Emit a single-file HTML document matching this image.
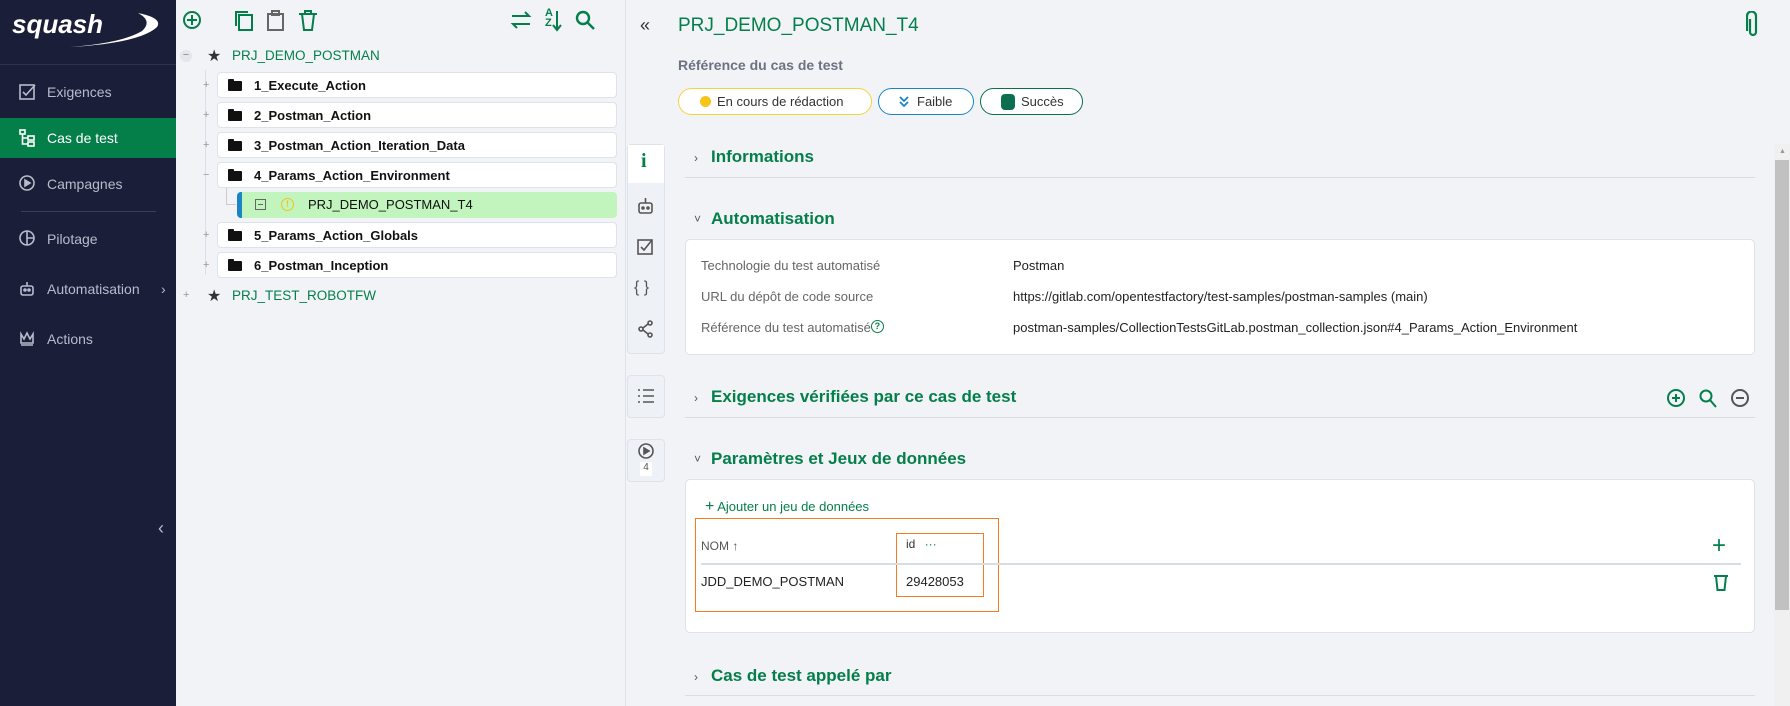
<!DOCTYPE html>
<html><head><meta charset="utf-8"><style>
*{box-sizing:border-box;margin:0;padding:0}
body{width:1790px;height:706px;overflow:hidden;background:#f2f3f7;font-family:"Liberation Sans",sans-serif;position:relative;color:#333}
.abs{position:absolute}
#side{left:0;top:0;width:176px;height:706px;background:#1b1e38}
.mi{position:absolute;left:0;width:176px;height:40px;color:#b8bccb;font-size:14px;display:flex;align-items:center;padding-left:47px}
.mi svg{position:absolute;left:19px;top:11px}
.mi.act{background:#047f4a;color:#fff}
.g{color:#047f4a}
.row{position:absolute;left:217px;width:400px;height:26px;background:#fff;border:1px solid #dde3ea;border-radius:4px;font-size:13px;font-weight:bold;color:#111;display:flex;align-items:center;padding-left:36px}
.row .fo{position:absolute;left:10px;top:8px;width:14px;height:10px;background:#111;border-radius:1px}
.row .fo:before{content:"";position:absolute;left:0;top:-2px;width:6px;height:3px;background:#111;border-radius:1px 1px 0 0}
.pl{position:absolute;left:201px;width:8px;height:8px;font-size:11px;color:#999;line-height:8px}
.h{position:absolute;left:711px;font-size:17px;font-weight:bold;color:#047f4a}
.chev{position:absolute;left:694px;font-size:12px;color:#555}
.line{position:absolute;left:685px;width:1070px;height:1px;background:#d6dde4}
.card{position:absolute;left:685px;width:1070px;background:#fff;border:1px solid #dde3ea;border-radius:5px}
.lb{position:absolute;left:701px;font-size:13px;color:#666}
.vl{position:absolute;left:1013px;font-size:13px;color:#222}
.tab{position:absolute;left:627px;width:38px;background:#eef1f5;border:1px solid #dde3ea;border-radius:4px}
</style></head><body>
<div id="side" class="abs">
 <div class="abs" style="left:12px;top:9px;color:#fff;font:italic bold 26px 'Liberation Sans',sans-serif;letter-spacing:0px">squash</div>
 <svg class="abs" style="left:0;top:0" width="176" height="60"><path d="M70 47 Q140 43 157 27 Q163 18 138 13 Q153 21 142 31 Q122 43 70 47Z" fill="#fff"/></svg>
 <div class="abs" style="left:0;top:64px;width:176px;height:1px;background:#2e3150"></div>
 <div class="mi" style="top:72px"><svg width="18" height="18" fill="none" stroke="#b8bccb" stroke-width="1.6"><rect x="1" y="2" width="14" height="14"/><path d="M4 9l3 3 9-10"/></svg>Exigences</div>
 <div class="mi act" style="top:118px"><svg width="18" height="18" fill="none" stroke="#fff" stroke-width="1.6"><rect x="1" y="1" width="5" height="4"/><rect x="9" y="7" width="6" height="4"/><rect x="9" y="13" width="6" height="4"/><path d="M3.5 5v10h5M3.5 9h5"/></svg>Cas de test</div>
 <div class="mi" style="top:164px"><svg width="18" height="18" fill="none" stroke="#b8bccb" stroke-width="1.6"><circle cx="8" cy="8" r="7"/><path d="M6 5v6l5-3z" fill="#b8bccb"/></svg>Campagnes</div>
 <div class="abs" style="left:21px;top:211px;width:135px;height:1px;background:#3a3d5c"></div>
 <div class="mi" style="top:219px"><svg width="18" height="18" fill="none" stroke="#b8bccb" stroke-width="1.6"><circle cx="8" cy="8" r="7"/><path d="M8 1v14M8 8h7"/></svg>Pilotage</div>
 <div class="mi" style="top:269px"><svg width="18" height="18" fill="none" stroke="#b8bccb" stroke-width="1.6"><rect x="2" y="6" width="12" height="9" rx="2"/><path d="M8 2v4"/><circle cx="6" cy="10" r="1" fill="#b8bccb"/><circle cx="10" cy="10" r="1" fill="#b8bccb"/></svg>Automatisation<span style="position:absolute;left:161px">›</span></div>
 <div class="mi" style="top:319px"><svg width="18" height="18" fill="none" stroke="#b8bccb" stroke-width="1.6"><path d="M2 4l3 5 3-6 3 6 3-5v9H2zM2 15h12"/></svg>Actions</div>
 <div class="abs" style="left:158px;top:518px;color:#b8bccb;font-size:18px">‹</div>
</div>
<!-- tree toolbar -->
<svg class="abs" style="left:182px;top:10px" width="20" height="20" fill="none" stroke="#047f4a" stroke-width="2"><circle cx="10" cy="10" r="8"/><path d="M10 5v10M5 10h10"/></svg>
<svg class="abs" style="left:234px;top:10px" width="20" height="22" fill="none" stroke="#047f4a" stroke-width="2"><rect x="5" y="5" width="13" height="15"/><path d="M2 16V2h12"/></svg>
<svg class="abs" style="left:266px;top:10px" width="20" height="22" fill="none" stroke="#666" stroke-width="2"><rect x="2" y="4" width="15" height="16"/><rect x="6" y="1" width="7" height="4"/></svg>
<svg class="abs" style="left:298px;top:10px" width="20" height="22" fill="none" stroke="#047f4a" stroke-width="2"><path d="M1 4h18M4 4l2 16h8l2-16M7 4V1h6v3"/></svg>
<svg class="abs" style="left:510px;top:10px" width="22" height="20" fill="none" stroke="#047f4a" stroke-width="2"><path d="M2 6h17l-4-4M20 14H3l4 4"/></svg>
<div class="abs g" style="left:545px;top:8px;font-size:11px;font-weight:bold;line-height:10px">A<br>Z</div>
<svg class="abs" style="left:552px;top:10px" width="10" height="22" fill="none" stroke="#047f4a" stroke-width="2"><path d="M5 1v18M1 15l4 5 4-5"/></svg>
<svg class="abs" style="left:575px;top:10px" width="22" height="22" fill="none" stroke="#047f4a" stroke-width="2.4"><circle cx="8" cy="8" r="6"/><path d="M12 12l7 7"/></svg>
<!-- tree -->
<div class="abs" style="left:180px;top:50px;width:12px;height:12px;border-radius:50%;background:#e3e6ec;font-size:11px;color:#888;text-align:center;line-height:11px">−</div>
<div class="abs" style="left:207px;top:46px;font-size:16px">★</div>
<div class="abs g" style="left:232px;top:48px;font-size:13.5px">PRJ_DEMO_POSTMAN</div>
<div class="abs" style="left:205px;top:70px;width:1px;height:205px;background:#dde"></div>
<div class="row" style="top:72px"><span class="fo"></span>1_Execute_Action</div>
<div class="row" style="top:102px"><span class="fo"></span>2_Postman_Action</div>
<div class="row" style="top:132px"><span class="fo"></span>3_Postman_Action_Iteration_Data</div>
<div class="row" style="top:162px"><span class="fo"></span>4_Params_Action_Environment</div>
<div class="abs" style="left:226px;top:188px;width:1px;height:17px;background:#ccc"></div>
<div class="abs" style="left:226px;top:204px;width:10px;height:1px;background:#ccc"></div>
<div class="abs" style="left:237px;top:192px;width:380px;height:26px;background:#c1f5bd;border-left:5px solid #1b84c6;border-radius:4px;font-size:13px;color:#111;padding:5px 0 0 66px">PRJ_DEMO_POSTMAN_T4</div>
<div class="abs" style="left:255px;top:199px;width:11px;height:11px;border:1px solid #666"><div style="margin:4px 2px;height:1px;background:#666"></div></div>
<div class="abs" style="left:281px;top:198px;width:13px;height:13px;border:1.5px solid #f0c419;border-radius:50%;font-size:9px;color:#f0c419;text-align:center;line-height:11px;font-weight:bold">!</div>
<div class="row" style="top:222px"><span class="fo"></span>5_Params_Action_Globals</div>
<div class="row" style="top:252px"><span class="fo"></span>6_Postman_Inception</div>
<div class="pl" style="left:203px;top:81px">+</div><div class="pl" style="left:203px;top:111px">+</div><div class="pl" style="left:203px;top:141px">+</div><div class="pl" style="left:203px;top:171px">−</div><div class="pl" style="left:203px;top:231px">+</div><div class="pl" style="left:203px;top:261px">+</div>
<div class="pl" style="left:183px;top:291px">+</div>
<div class="abs" style="left:207px;top:286px;font-size:16px">★</div>
<div class="abs g" style="left:232px;top:288px;font-size:13.5px">PRJ_TEST_ROBOTFW</div>
<div class="abs" style="left:625px;top:0;width:1px;height:706px;background:#dde3ea"></div>
<!-- right -->
<div class="abs" style="left:640px;top:15px;font-size:18px;color:#333">«</div>
<div class="abs g" style="left:678px;top:15px;font-size:19px">PRJ_DEMO_POSTMAN_T4</div>
<svg class="abs" style="left:1746px;top:11px" width="14" height="28" fill="none" stroke="#047f4a" stroke-width="2.2"><path d="M4 8v13a3 3 0 006 0V5a4.5 4.5 0 00-9 0v15"/></svg>
<div class="abs" style="left:678px;top:57px;font-size:14px;font-weight:bold;color:#6b7280">Référence du cas de test</div>
<div class="abs" style="left:678px;top:88px;width:194px;height:27px;border:1.5px solid #f5d33c;border-radius:14px;background:#fff;font-size:13px;padding:5px 0 0 38px">En cours de rédaction</div>
<div class="abs" style="left:700px;top:96px;width:11px;height:11px;border-radius:50%;background:#f5c518"></div>
<div class="abs" style="left:878px;top:88px;width:96px;height:27px;border:1.5px solid #1b84c6;border-radius:14px;background:#fff;font-size:13px;padding:5px 0 0 38px">Faible</div>
<svg class="abs" style="left:898px;top:95px" width="12" height="13" fill="none" stroke="#1b84c6" stroke-width="1.8"><path d="M2 2l4 4 4-4M2 7l4 4 4-4"/></svg>
<div class="abs" style="left:980px;top:88px;width:103px;height:27px;border:1.5px solid #0b6e4f;border-radius:14px;background:#fff;font-size:13px;padding:5px 0 0 40px">Succès</div>
<div class="abs" style="left:1001px;top:94px;width:14px;height:16px;border-radius:4px;background:#0b6e4f"></div>
<!-- tab strip -->
<div class="tab" style="top:144px;height:210px"></div>
<div class="abs" style="left:628px;top:145px;width:36px;height:38px;background:#fff"></div>
<div class="abs g" style="left:641px;top:150px;font:bold 20px 'Liberation Serif',serif">i</div>
<svg class="abs" style="left:637px;top:196px" width="18" height="20" fill="none" stroke="#555" stroke-width="1.6"><rect x="2" y="7" width="13" height="10" rx="2"/><path d="M8.5 2v5"/><circle cx="6" cy="12" r="1" fill="#555"/><circle cx="11" cy="12" r="1" fill="#555"/></svg>
<svg class="abs" style="left:637px;top:238px" width="18" height="18" fill="none" stroke="#555" stroke-width="1.6"><rect x="1" y="2" width="14" height="14"/><path d="M4 9l3 3 8-10"/></svg>
<div class="abs" style="left:634px;top:279px;font-size:16px;color:#555">{ }</div>
<svg class="abs" style="left:637px;top:320px" width="18" height="18" fill="none" stroke="#555" stroke-width="1.6"><circle cx="4" cy="9" r="2"/><circle cx="13" cy="3" r="2"/><circle cx="13" cy="15" r="2"/><path d="M6 8l5-4M6 10l5 4"/></svg>
<div class="tab" style="top:375px;height:43px"></div>
<svg class="abs" style="left:637px;top:387px" width="18" height="18" fill="none" stroke="#555" stroke-width="1.6"><path d="M6 3h11M6 9h11M6 15h11M1 3h2M1 9h2M1 15h2"/></svg>
<div class="tab" style="top:439px;height:43px"></div>
<svg class="abs" style="left:638px;top:443px" width="16" height="16" fill="none" stroke="#555" stroke-width="1.6"><circle cx="8" cy="8" r="7"/><path d="M6 5v6l5-3z" fill="#555"/></svg>
<div class="abs" style="left:640px;top:462px;width:12px;height:14px;background:#fff;font-size:10px;text-align:center;color:#555">4</div>
<!-- sections -->
<div class="chev" style="top:151px">›</div><div class="h" style="top:147px">Informations</div>
<div class="line" style="top:177px"></div>
<div class="chev" style="top:212px">˅</div><div class="h" style="top:209px">Automatisation</div>
<div class="card" style="top:239px;height:116px"></div>
<div class="lb" style="top:258px">Technologie du test automatisé</div><div class="vl" style="top:258px">Postman</div>
<div class="lb" style="top:289px">URL du dépôt de code source</div><div class="vl" style="top:289px">https://gitlab.com/opentestfactory/test-samples/postman-samples (main)</div>
<div class="lb" style="top:320px">Référence du test automatisé<span class="g" style="display:inline-block;width:13px;height:13px;border:1.5px solid #047f4a;border-radius:50%;font-size:9px;text-align:center;line-height:10px;vertical-align:top;font-weight:bold">?</span></div><div class="vl" style="top:320px">postman-samples/CollectionTestsGitLab.postman_collection.json#4_Params_Action_Environment</div>
<div class="chev" style="top:391px">›</div><div class="h" style="top:387px">Exigences vérifiées par ce cas de test</div>
<svg class="abs" style="left:1665px;top:387px" width="90" height="22" fill="none" stroke="#047f4a" stroke-width="2"><circle cx="11" cy="11" r="8"/><path d="M11 7v8M7 11h8"/><circle cx="41" cy="9" r="5.5"/><path d="M45 13l6 7"/><circle cx="75" cy="11" r="8" stroke="#555"/><path d="M71 11h8" stroke="#555"/></svg>
<div class="line" style="top:417px"></div>
<div class="chev" style="top:452px">˅</div><div class="h" style="top:449px">Paramètres et Jeux de données</div>
<div class="card" style="top:479px;height:154px"></div>
<div class="abs g" style="left:705px;top:498px;font-size:13px"><span style="font-size:16px">+</span> Ajouter un jeu de données</div>
<div class="abs" style="left:695px;top:518px;width:304px;height:94px;border:1.5px solid #f47c20"></div>
<div class="abs" style="left:896px;top:533px;width:88px;height:64px;border:1.5px solid #f47c20"></div>
<div class="abs" style="left:701px;top:539px;font-size:12px;color:#555">NOM ↑</div>
<div class="abs" style="left:906px;top:537px;font-size:12px;color:#333">id <span class="g" style="margin-left:6px">···</span></div>
<div class="abs" style="left:701px;top:563px;width:1040px;height:2px;background:#d6dde4"></div>
<div class="abs" style="left:701px;top:574px;font-size:13px;color:#222">JDD_DEMO_POSTMAN</div>
<div class="abs" style="left:906px;top:574px;font-size:13px;color:#222">29428053</div>
<div class="abs g" style="left:1712px;top:532px;font-size:24px">+</div>
<svg class="abs" style="left:1713px;top:574px" width="16" height="18" fill="none" stroke="#047f4a" stroke-width="2"><path d="M1 2h14M3 2l1.5 14h7L13 2"/></svg>
<div class="chev" style="top:670px">›</div><div class="h" style="top:666px">Cas de test appelé par</div>
<div class="line" style="top:695px"></div>
<!-- scrollbar -->
<div class="abs" style="left:1774px;top:144px;width:16px;height:562px;background:#f0f0f0"></div>
<div class="abs" style="left:1779px;top:148px;font-size:7px;color:#999">▲</div>
<div class="abs" style="left:1775px;top:160px;width:14px;height:450px;background:#c1c1c1"></div>
</body></html>
